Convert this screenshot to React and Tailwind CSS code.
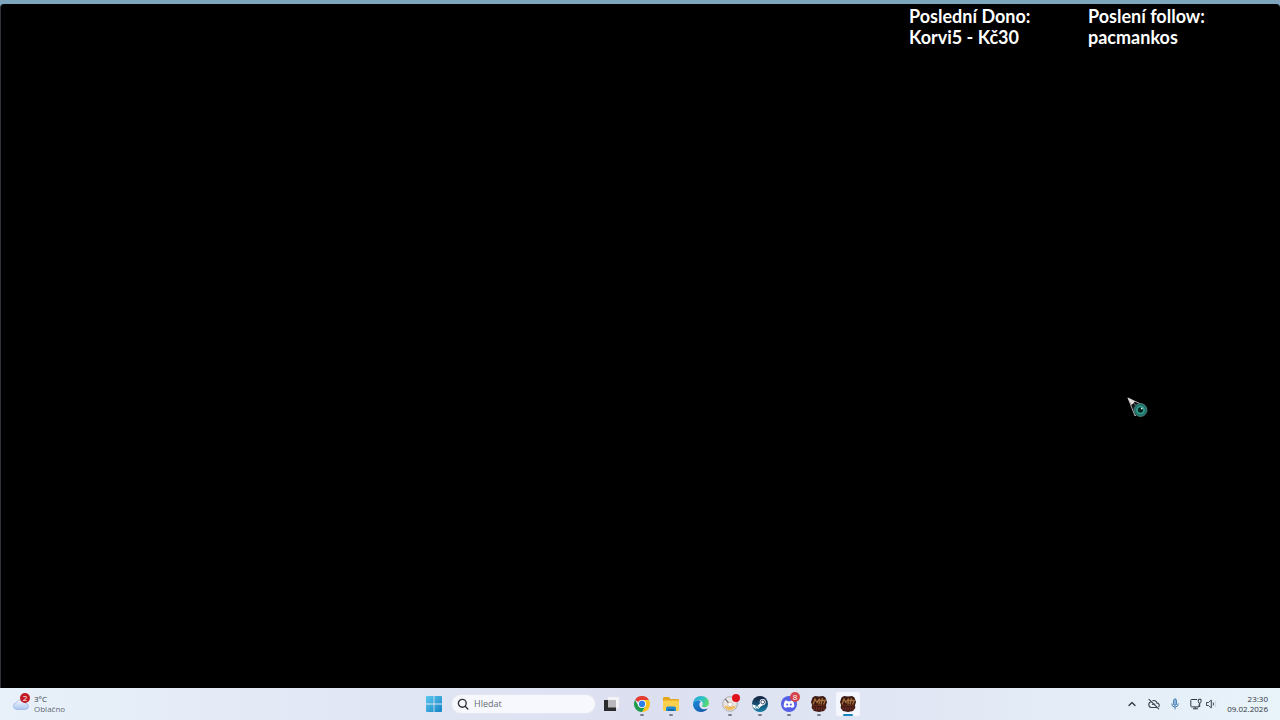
import React from "react";
import { ChevronUp } from "lucide-react";

const StartIcon = () => (
    <svg viewBox="0 0 16 16" className="w-4 h-4">
        <defs>
            <linearGradient id="win" x1="0" y1="0" x2="1" y2="1">
                <stop offset="0" stopColor="#5cc8ee" />
                <stop offset="1" stopColor="#1583c6" />
            </linearGradient>
        </defs>
        <path
            fill="url(#win)"
            d="M1 0h6.6v7.6H0V1a1 1 0 0 1 1-1zM8.4 0H15a1 1 0 0 1 1 1v6.6H8.4zM0 8.4h7.6V16H1a1 1 0 0 1-1-1zM8.4 8.4H16V15a1 1 0 0 1-1 1H8.4z"
        />
    </svg>
);

const SearchIcon = () => (
    <svg viewBox="0 0 12 12" className="w-3 h-3 shrink-0" fill="none" stroke="#2f3238" strokeWidth="1.4" strokeLinecap="round">
        <circle cx="5.3" cy="5.3" r="3.9" />
        <path d="M8.2 8.2 10.8 10.9" />
    </svg>
);

const TaskViewIcon = () => (
    <svg viewBox="0 0 18 18" className="w-[18px] h-[18px]">
        <rect x="5" y="2" width="11" height="11" rx="1" fill="#f4f4f6" />
        <rect x="1" y="5" width="12" height="11" fill="#2b2b2d" />
        <rect x="5" y="5" width="8" height="7.5" fill="#b9b9bd" />
    </svg>
);

const ChromeIcon = () => (
    <svg viewBox="0 0 48 48" className="w-4 h-4">
        <path fill="#e33b2e" d="M24 24 3.2 12A24 24 0 0 1 44.8 12H24z" />
        <path fill="#fcc31e" d="M24 12h20.8A24 24 0 0 1 24 48l10.4-18z" />
        <path fill="#229a4b" d="M3.2 12A24 24 0 0 0 24 48l10.4-18H13.6z" />
        <circle cx="24" cy="24" r="12" fill="#fff" />
        <circle cx="24" cy="24" r="9.4" fill="#2f7de8" />
    </svg>
);

const FolderIcon = () => (
    <svg viewBox="0 0 18 16" className="w-[18px] h-4">
        <path fill="#e5a51c" d="M1 2.2A1.2 1.2 0 0 1 2.2 1h4.6l1.8 2h7.2A1.2 1.2 0 0 1 17 4.2V8H1z" />
        <rect x="1" y="4.5" width="16" height="10.5" rx="1.2" fill="#fbd04f" />
        <path fill="#2189cf" d="M4 15v-3a1.6 1.6 0 0 1 1.6-1.6h6.8A1.6 1.6 0 0 1 14 12v3z" />
        <path fill="#156aa9" d="M6 13h6v2H6z" />
    </svg>
);

const EdgeIcon = () => (
    <svg viewBox="0 0 24 24" className="w-4 h-4">
        <defs>
            <linearGradient id="edgeTop" x1="0" y1="0.3" x2="1" y2="0.6">
                <stop offset="0" stopColor="#27a8e0" />
                <stop offset="0.55" stopColor="#2cc3bd" />
                <stop offset="1" stopColor="#62dc62" />
            </linearGradient>
            <linearGradient id="edgeLow" x1="0" y1="0" x2="1" y2="1">
                <stop offset="0" stopColor="#1c8ddd" />
                <stop offset="1" stopColor="#12509f" />
            </linearGradient>
        </defs>
        <path fill="url(#edgeLow)" d="M0 12c0 7 5.5 12 12 12 4.3 0 8-2.2 10-5.4-7 3.4-13-1-12.5-6C9.7 10 11 9 12 8.5 8 4.5 0 6 0 12z" />
        <path fill="url(#edgeTop)" d="M0 11C.6 4.6 5.7 0 12 0c7 0 12 5 12 10.5 0 4-3 6.2-6.3 6.2-2.7 0-4.2-1-4.2-1.8 0-.7 1.3-1.1 1.3-3.2C14.8 8.5 11.8 6 8 6c-4 0-6.8 2-8 5z" />
    </svg>
);

const DialIcon = () => (
    <svg viewBox="0 0 18 18" className="w-[18px] h-[18px]">
        <circle cx="9" cy="9" r="7.3" fill="#e9e5e5" stroke="#aaa6a9" strokeWidth="0.9" />
        <path d="M3.2 10.5a6 6 0 0 0 11.6 0l-2.8.8-3 .7-3-.7z" fill="#f0bc58" />
        <path d="M4.2 3.8 8 8.5" stroke="#77757c" strokeWidth="1.2" />
        <circle cx="9" cy="9.4" r="2.2" fill="#fff" stroke="#c8a98c" strokeWidth="0.6" />
    </svg>
);

const SteamIcon = () => (
    <svg viewBox="0 0 24 24" className="w-4 h-4">
        <defs>
            <linearGradient id="steam" x1="0" y1="0" x2="0" y2="1">
                <stop offset="0" stopColor="#141f3d" />
                <stop offset="1" stopColor="#1780a8" />
            </linearGradient>
        </defs>
        <circle cx="12" cy="12" r="12" fill="url(#steam)" />
        <path d="M.5 12.3 7.5 15l4.3-3.2 1-5.3 5 6.6-4.8 2.7-3.2 3.6-4.3.5L1 16z" fill="#fff" />
        <circle cx="16" cy="9" r="4.5" fill="#fff" />
        <circle cx="16" cy="9" r="2.8" fill="#fff" stroke="#192c4c" strokeWidth="1.2" />
        <circle cx="7.6" cy="17" r="2.2" fill="none" stroke="#1a6388" strokeWidth="1" />
    </svg>
);

const DiscordIcon = () => (
    <svg viewBox="0 0 24 24" className="w-4 h-4">
        <circle cx="12" cy="12" r="12" fill="#5660e4" />
        <path
            fill="#fff"
            d="M8.7 6.5C7.4 6.7 6.5 7.1 6 7.4 4.7 9.5 4 12 4.1 16c1.3 1 2.6 1.6 3.9 2l1-1.6c2 .5 4 .5 6 0l1 1.6c1.3-.4 2.6-1 3.9-2 .1-4-.6-6.5-1.9-8.6-.5-.3-1.4-.7-2.7-.9l-.7 1.2H9.400z"
        />
        <circle cx="9.3" cy="12.9" r="1.6" fill="#5660e4" />
        <circle cx="14.7" cy="12.9" r="1.6" fill="#5660e4" />
    </svg>
);

const GameIcon = () => (
    <svg viewBox="0 0 18 18" className="w-[18px] h-[18px]">
        <path fill="#3a1a12" d="M2.5 2.5 5 1l4 .6L13 1l2.500 1.500L17 7l-1 3 .3 3-2.300 3-5 1-5-1-2.300-3 .3-3-1-3z" />
        <path d="M3 9.500 5 4l2 3.500 2.500-4-.5 6M12.500 3l-1.500 6.500M10 5.500h5.200l-1.700 4" fill="none" stroke="#a9703d" strokeWidth="1.3" />
        <path d="M2.5 10.4h13" stroke="#6f2a17" strokeWidth="1" />
        <path d="M4 12v3M6.500 12v3.500M9 12v3.500M11.500 12v3.500M14 12v3" stroke="#702a28" strokeWidth="1.3" />
    </svg>
);

const WeatherIcon = () => (
    <svg viewBox="0 0 18 14" className="w-[18px] h-3.5">
        <defs>
            <linearGradient id="cloud" x1="0" y1="0" x2="0" y2="1">
                <stop offset="0" stopColor="#f5f9ff" />
                <stop offset="1" stopColor="#a9c5ee" />
            </linearGradient>
        </defs>
        <path
            d="M4.5 12.5A3.5 3.5 0 0 1 4.3 5.6 4.6 4.6 0 0 1 13 6.3a3.1 3.1 0 0 1 .6 6.2z"
            fill="url(#cloud)"
            stroke="#9ab5e2"
            strokeWidth="0.7"
        />
    </svg>
);

const CloudOffIcon = () => (
    <svg viewBox="0 0 12 12" className="w-3 h-3" fill="none" stroke="#3b4149" strokeWidth="1.1" strokeLinecap="round">
        <path d="M3.2 3.8A2.9 2.9 0 0 0 3.2 9.5H8.5M4.8 2.8a3 3 0 0 1 4.2 2.3 2.2 2.2 0 0 1 1.8 3.5M1 1.3l9.7 9.5M4.5 6.5c.6-.8 1.5-.8 2.2-.3" />
    </svg>
);

const MicIcon = () => (
    <svg viewBox="0 0 12 12" className="w-3 h-3" fill="none" stroke="#4a7fb5" strokeWidth="1" strokeLinecap="round">
        <rect x="4.5" y="1" width="3" height="6.3" rx="1.5" fill="#8bb4dc" />
        <path d="M2.7 5.8a3.3 3.3 0 0 0 6.6 0M6 9.2V11" />
    </svg>
);

const NetworkIcon = () => (
    <svg viewBox="0 0 12 12" className="w-3 h-3" fill="none" stroke="#30363d" strokeWidth="1">
        <path d="M7 1.5H1.5a.7.7 0 0 0-.7.7v6c0 .4.3.7.7.7H9V6.5M3 10.8h5M5.2 9v1.8" />
        <path d="M8.3 1.3H11v2.4a1.3 1.3 0 0 1-2.7 0zM9.7 5v4" />
    </svg>
);

const SpeakerIcon = () => (
    <svg viewBox="0 0 12 12" className="w-3 h-3" fill="none" stroke="#30363d" strokeWidth="0.9" strokeLinejoin="round">
        <path d="M1.5 4.5h2L6.3 2v8L3.5 7.5h-2z" />
        <path d="M8 4.5a2.2 2.2 0 0 1 0 3" />
        <path d="M9.6 3a4.2 4.2 0 0 1 0 6" stroke="#c3ccd6" />
    </svg>
);

const apps = [
    { name: "Zobrazení úloh", icon: <TaskViewIcon /> },
    { name: "Google Chrome", icon: <ChromeIcon />, running: true },
    { name: "Průzkumník souborů", icon: <FolderIcon />, running: true },
    { name: "Microsoft Edge", icon: <EdgeIcon /> },
    { name: "Záznam", icon: <DialIcon />, running: true, dot: true },
    { name: "Steam", icon: <SteamIcon />, running: true },
    { name: "Discord", icon: <DiscordIcon />, running: true, badge: "8" },
    { name: "Hra", icon: <GameIcon />, running: true },
    { name: "Hra – aktivní", icon: <GameIcon />, running: true, active: true },
];

function AppButton({ app }) {
    return (
        <button
            aria-label={app.name}
            className={`relative w-6 h-6 flex items-center justify-center rounded-xs ${app.active ? "bg-[#f5f7fc]" : ""}`}
        >
            {app.icon}
            {app.dot && <span className="absolute right-0.5 top-0.5 w-2 h-2 rounded-full bg-[#e0101c]" />}
            {app.badge && (
                <span className="absolute right-px top-0 w-2.5 h-2.5 rounded-full bg-[#d6434c] text-white text-[8px] leading-[10px] text-center">
                    {app.badge}
                </span>
            )}
            {app.running && (
                <span
                    className={`absolute bottom-0 left-1/2 -translate-x-1/2 h-0.5 rounded-full ${app.active ? "w-2.5 bg-[#1786bd]" : "w-1 bg-[#7c7f89]"}`}
                />
            )}
        </button>
    );
}

function Cursor() {
    return (
        <svg viewBox="0 0 22 22" className="absolute left-[1126px] top-[393px] w-[22px] h-[22px]">
            <path d="M1 1 18 9 8 19z" fill="#101414" stroke="#a9aaa9" strokeWidth="1" />
            <path d="M1 1 13 12" stroke="#77706f" strokeWidth="1" />
            <path d="M.5.5 8 4.5 4.500 8z" fill="#e6dfdd" />
            <circle cx="13.5" cy="13" r="6.5" fill="#1d7169" stroke="#56827c" strokeWidth="0.8" />
            <circle cx="13.5" cy="13" r="4.3" fill="#36a18e" />
            <circle cx="13.5" cy="13" r="2.7" fill="#062220" />
            <circle cx="14.8" cy="11.5" r="0.9" fill="#d7f5ec" />
        </svg>
    );
}

export default function App() {
    return (
        <div className="min-h-screen flex flex-col bg-[#7fa5bd] pt-1 font-['Open_Sans','Noto_Sans',sans-serif]">
            {/* Fullscreen window */}
            <main className="relative flex-1 rounded-t-sm bg-black border-l border-[#30343a]">
                <div className="flex justify-end pt-0.5 text-white font-bold text-lg leading-[21px] font-['Lato',sans-serif]">
                    <p className="w-[179px]">
                        Poslední Dono:
                        <br />
                        Korvi5 - Kč30
                    </p>
                    <p className="w-48">
                        Poslení follow:
                        <br />
                        pacmankos
                    </p>
                </div>
                <Cursor />
            </main>

            {/* Taskbar */}
            <footer className="h-8 grid grid-cols-[1fr_auto_1fr] items-center bg-linear-to-r from-[#e8f1fa] via-[#dcdff0] to-[#e8f3fa] text-[#30353d] text-[8px] leading-[10px]">
                <button className="justify-self-start flex items-center gap-1 pl-3 pb-px text-left">
                    <span className="relative">
                        <WeatherIcon />
                        <span className="absolute left-2 -top-1 w-2.5 h-2.5 rounded-full bg-[#c21b25] text-white text-[8px] leading-[10px] text-center">
                            2
                        </span>
                    </span>
                    <span>
                        3°C
                        <br />
                        <span className="text-[#626973]">Oblačno</span>
                    </span>
                </button>

                <nav className="flex items-center gap-1">
                    <button aria-label="Start" className="w-[27px] h-6 flex items-center justify-center">
                        <StartIcon />
                    </button>
                    <label className="w-[145px] h-5 flex items-center gap-[5px] pl-[5px] rounded-full bg-[#f6f8fd] border border-[#e4e7f2]">
                        <SearchIcon />
                        <input
                            type="search"
                            aria-label="Hledat"
                            placeholder="Hledat"
                            className="w-full min-w-0 bg-transparent outline-none text-[9px] leading-3 placeholder:text-[#666b74]"
                        />
                    </label>
                    <div className="w-[260px] flex justify-between">
                        {apps.map((app) => (
                            <AppButton key={app.name} app={app} />
                        ))}
                    </div>
                </nav>

                <div className="justify-self-end flex items-center pr-3 pb-px">
                    <button aria-label="Skryté ikony" className="mr-2.5">
                        <ChevronUp size={12} strokeWidth={2.5} />
                    </button>
                    <button aria-label="OneDrive" className="mr-[9px]">
                        <CloudOffIcon />
                    </button>
                    <button aria-label="Mikrofon" className="mr-[9px]">
                        <MicIcon />
                    </button>
                    <button aria-label="Síť a zvuk" className="flex gap-[3px] mr-2.5">
                        <NetworkIcon />
                        <SpeakerIcon />
                    </button>
                    <button className="text-right">
                        23:30
                        <br />
                        09.02.2026
                    </button>
                </div>
            </footer>
        </div>
    );
}
